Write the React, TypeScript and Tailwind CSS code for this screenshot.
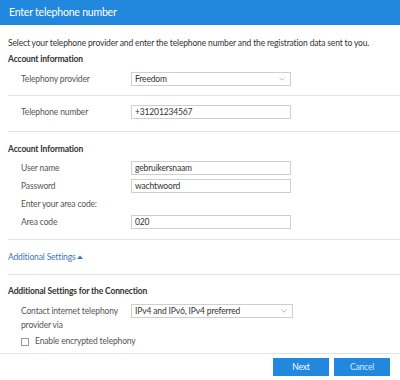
const inputCls =
  "h-[14px] w-[160px] border border-[#cfcfcf] bg-white px-[3px] leading-[12px] text-[#333]";

function Row({ label, children }: { label: React.ReactNode; children?: React.ReactNode }) {
  return (
    <div className="flex items-start pl-[21px]">
      <div className="w-[110px] text-[#555]">{label}</div>
      {children}
    </div>
  );
}

function Select({ value, wide }: { value: string; wide?: boolean }) {
  return (
    <div className={`${inputCls} ${wide ? "w-[162px]" : ""} flex items-center justify-between`}>
      <span>{value}</span>
      <svg width="6" height="4" viewBox="0 0 6 4" className="mr-[2px]">
        <path d="M0.5 0.8 L3 3.2 L5.5 0.8" fill="none" stroke="#aaa" strokeWidth="0.8" />
      </svg>
    </div>
  );
}

function Divider() {
  return <div className="ml-[8px] h-px bg-[#e3e3e3]" />;
}

export default function App() {
  return (
    <div
      className="h-[380px] w-[400px] overflow-hidden bg-white text-[8.5px] leading-[13px] tracking-[-0.15px] text-[#333]"
      style={{ fontFamily: "Lato, 'Liberation Sans', sans-serif" }}
    >
      <div className="flex h-[25px] items-center bg-[#2288dd] pl-[9px] text-[10.5px] tracking-[-0.2px] text-white">
        Enter telephone number
      </div>
      <div className="pt-[12px] pl-[8px]">
        Select your telephone provider and enter the telephone number and the registration data sent to you.
      </div>
      <div className="mt-[3px] pl-[8px] font-bold text-[#333]">Account information</div>
      <div className="mt-[6px] pb-[9px]">
        <Row label={<span className="leading-[14px]">Telephony provider</span>}>
          <Select value="Freedom" />
        </Row>
      </div>
      <Divider />
      <div className="pt-[9px] pb-[12px]">
        <Row label={<span className="leading-[14px]">Telephone number</span>}>
          <div className={inputCls}>+31201234567</div>
        </Row>
      </div>
      <Divider />
      <div className="mt-[11px] pl-[8px] font-bold">Account Information</div>
      <div className="mt-[5px] flex flex-col gap-[4px] pb-[10px]">
        <Row label={<span className="leading-[14px]">User name</span>}>
          <div className={inputCls}>gebruikersnaam</div>
        </Row>
        <Row label={<span className="leading-[14px]">Password</span>}>
          <div className={inputCls}>wachtwoord</div>
        </Row>
        <Row label={<span className="leading-[14px]">Enter your area code:</span>} />
        <Row label={<span className="leading-[14px]">Area code</span>}>
          <div className={inputCls}>020</div>
        </Row>
      </div>
      <Divider />
      <div className="flex h-[34px] items-center pl-[8px] text-[#3d74c4]">
        Additional Settings
        <svg width="6" height="4" viewBox="0 0 6 4" className="ml-[2px]">
          <path d="M0 4 L3 0.5 L6 4 Z" fill="#3d74c4" />
        </svg>
      </div>
      <Divider />
      <div className="mt-[10px] pl-[8px] font-bold">Additional Settings for the Connection</div>
      <div className="mt-[6px]">
        <Row
          label={
            <span className="block leading-[14px]">
              Contact internet telephony
              <br />
              provider via
            </span>
          }
        >
          <Select value="IPv4 and IPv6, IPv4 preferred" wide />
        </Row>
      </div>
      <div className="mt-[3px] flex h-[13px] items-center gap-[6px] pl-[21px] text-[#555]">
        <div className="h-[8px] w-[8px] border border-[#999] bg-white" />
        Enable encrypted telephony
      </div>
      <div className="mt-[5px] h-px bg-[#e3e3e3]" />
      <div className="flex justify-end gap-[5px] pt-[4px] pr-[10px]">
        <button className="flex h-[18px] w-[56px] items-center justify-center bg-[#2288dd] text-white">
          Next
        </button>
        <button className="flex h-[18px] w-[56px] items-center justify-center bg-[#2288dd] text-[#dbe9f7]">
          Cancel
        </button>
      </div>
    </div>
  );
}
